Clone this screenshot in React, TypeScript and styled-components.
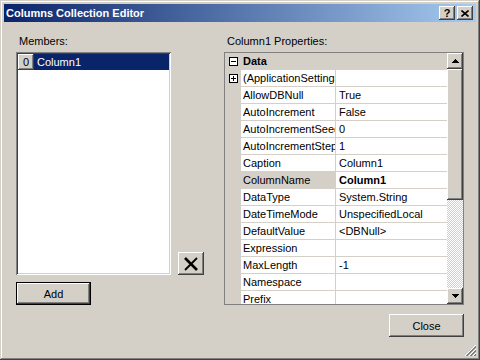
import React from 'react';
import styled, { createGlobalStyle, css } from 'styled-components';

const face = '#D4D0C8';

const GlobalStyle = createGlobalStyle`
	html, body {
		margin: 0;
		padding: 0;
		background: ${face};
	}
	body {
		font-family: "Liberation Sans", Arial, sans-serif;
		font-size: 11px;
		color: #000;
	}
`;

const raised = css`
	background: ${face};
	box-shadow: inset -1px -1px #404040, inset 1px 1px #fff, inset -2px -2px #808080, inset 2px 2px ${face};
`;

type Property = {
	name: string;
	value: string;
	expandable?: boolean;
	selected?: boolean;
	modified?: boolean;
};

const properties: Property[] = [
	{ name: '(ApplicationSettings)', value: '', expandable: true },
	{ name: 'AllowDBNull', value: 'True' },
	{ name: 'AutoIncrement', value: 'False' },
	{ name: 'AutoIncrementSeed', value: '0' },
	{ name: 'AutoIncrementStep', value: '1' },
	{ name: 'Caption', value: 'Column1' },
	{ name: 'ColumnName', value: 'Column1', selected: true, modified: true },
	{ name: 'DataType', value: 'System.String' },
	{ name: 'DateTimeMode', value: 'UnspecifiedLocal' },
	{ name: 'DefaultValue', value: '<DBNull>' },
	{ name: 'Expression', value: '' },
	{ name: 'MaxLength', value: '-1' },
	{ name: 'Namespace', value: '' },
	{ name: 'Prefix', value: '' },
	{ name: 'ReadOnly', value: 'False' },
];

const ExpandBox = ({ open }: { open: boolean }) => (
	<svg width="9" height="9" viewBox="0 0 9 9" shapeRendering="crispEdges">
		<rect x="0.5" y="0.5" width="8" height="8" fill="#fff" stroke="#000" />
		<line x1="2" y1="4.5" x2="7" y2="4.5" stroke="#000" />
		{!open && <line x1="4.5" y1="2" x2="4.5" y2="7" stroke="#000" />}
	</svg>
);

const Arrow = ({ down }: { down?: boolean }) => (
	<svg width="7" height="4" viewBox="0 0 7 4" shapeRendering="crispEdges">
		<polygon points={down ? '0,0 7,0 3.5,4' : '3.5,0 7,4 0,4'} fill="#000" />
	</svg>
);

const Dialog: React.FC = () => {
	return (
		<Window>
			<TitleBar>
				<Title>Columns Collection Editor</Title>
				<CaptionButtons>
					<CaptionButton>?</CaptionButton>
					<CaptionButton>
						<svg width="8" height="7" viewBox="0 0 8 7">
							<path d="M0.5 0.5 L7.5 6.5 M7.5 0.5 L0.5 6.5" stroke="#000" strokeWidth="1.6" />
						</svg>
					</CaptionButton>
				</CaptionButtons>
			</TitleBar>
			<Body>
				<Panes>
					<LeftPane>
						<Label>Members:</Label>
						<ListRow>
							<MemberList>
								<MemberItem>
									<IndexCell>0</IndexCell>
									<MemberName>Column1</MemberName>
								</MemberItem>
							</MemberList>
							<DeleteButton>
								<svg width="16" height="14" viewBox="0 0 16 14">
									<path d="M2 1 L14 13" stroke="#000" strokeWidth="2.6" />
									<path d="M14 1 L2 13" stroke="#000" strokeWidth="1.8" />
								</svg>
							</DeleteButton>
						</ListRow>
						<AddButton>Add</AddButton>
					</LeftPane>
					<RightPane>
						<Label>Column1 Properties:</Label>
						<PropertyGrid>
							<Rows>
								<CategoryRow>
									<Margin>
										<ExpandBox open />
									</Margin>
									<CategoryName>Data</CategoryName>
								</CategoryRow>
								{properties.map((p) => (
									<PropRow key={p.name}>
										<Margin>{p.expandable && <ExpandBox open={false} />}</Margin>
										<NameCell $selected={p.selected}>{p.name}</NameCell>
										<ValueCell $bold={p.modified}>{p.value}</ValueCell>
									</PropRow>
								))}
							</Rows>
							<ScrollBar>
								<ScrollButton>
									<Arrow />
								</ScrollButton>
								<Thumb />
								<Track />
								<ScrollButton>
									<Arrow down />
								</ScrollButton>
							</ScrollBar>
						</PropertyGrid>
					</RightPane>
				</Panes>
				<Footer>
					<PushButton>Close</PushButton>
				</Footer>
			</Body>
			<SizeGrip width="13" height="13" viewBox="0 0 13 13" shapeRendering="crispEdges">
				<path d="M12 1 L1 12 M12 5 L5 12 M12 9 L9 12" stroke="#fff" />
				<path d="M12 2 L2 12 M12 3 L3 12 M12 6 L6 12 M12 7 L7 12 M12 10 L10 12 M12 11 L11 12" stroke="#808080" />
			</SizeGrip>
		</Window>
	);
};

const App: React.FC = () => (
	<>
		<GlobalStyle />
		<Dialog />
	</>
);

const Window = styled.div`
	position: relative;
	box-sizing: border-box;
	width: 480px;
	height: 360px;
	padding: 4px;
	display: flex;
	flex-direction: column;
	background: ${face};
	box-shadow: inset -1px -1px #404040, inset 1px 1px ${face}, inset -2px -2px #808080, inset 2px 2px #fff;
`;

const TitleBar = styled.div`
	height: 18px;
	display: flex;
	align-items: center;
	padding: 0 3px 0 2px;
	background: linear-gradient(to right, #0a246a, #a6caf0);
`;

const Title = styled.div`
	color: #fff;
	font-weight: bold;
	font-size: 11px;
	line-height: 18px;
	white-space: nowrap;
`;

const CaptionButtons = styled.div`
	margin-left: auto;
	display: flex;
	gap: 2px;
`;

const CaptionButton = styled.div`
	${raised};
	width: 16px;
	height: 14px;
	display: flex;
	align-items: center;
	justify-content: center;
	font-weight: bold;
	font-size: 11px;
	line-height: 14px;
`;

const Body = styled.div`
	flex: 1;
	display: flex;
	flex-direction: column;
	padding: 13px 12px 0 12px;
`;

const Panes = styled.div`
	display: flex;
	gap: 20px;
`;

const LeftPane = styled.div`
	width: 188px;
	display: flex;
	flex-direction: column;
`;

const RightPane = styled.div`
	width: 240px;
	display: flex;
	flex-direction: column;
`;

const Label = styled.div`
	line-height: 13px;
	padding-left: 3px;
	margin-bottom: 4px;
`;

const ListRow = styled.div`
	display: flex;
	align-items: flex-end;
	gap: 7px;
`;

const MemberList = styled.div`
	box-sizing: border-box;
	width: 155px;
	height: 223px;
	padding: 2px;
	background: #fff;
	box-shadow: inset 1px 1px #808080, inset -1px -1px #fff, inset 2px 2px #404040, inset -2px -2px ${face};
`;

const MemberItem = styled.div`
	display: flex;
	height: 16px;
`;

const IndexCell = styled.div`
	${raised};
	width: 16px;
	text-align: center;
	line-height: 16px;
`;

const MemberName = styled.div`
	flex: 1;
	padding-left: 3px;
	line-height: 16px;
	color: #fff;
	background: #0a246a;
`;

const PushButton = styled.div`
	${raised};
	box-sizing: border-box;
	width: 75px;
	height: 23px;
	display: flex;
	align-items: center;
	justify-content: center;
`;

const DeleteButton = styled(PushButton)`
	width: 26px;
`;

const AddButton = styled(PushButton)`
	margin-top: 7px;
	border: 1px solid #000;
`;

const PropertyGrid = styled.div`
	box-sizing: border-box;
	height: 253px;
	display: flex;
	border: 1px solid #808080;
	background: ${face};
	overflow: hidden;
`;

const Rows = styled.div`
	flex: 1;
	min-width: 0;
	display: flex;
	flex-direction: column;
	overflow: hidden;
`;

const Margin = styled.div`
	flex: none;
	width: 16px;
	display: flex;
	align-items: center;
	justify-content: center;
	background: ${face};
`;

const CategoryRow = styled.div`
	flex: none;
	display: flex;
	height: 17px;
	background: ${face};
`;

const CategoryName = styled.div`
	padding-left: 2px;
	font-weight: bold;
	line-height: 16px;
`;

const PropRow = styled.div`
	flex: none;
	display: flex;
	height: 17px;
`;

const NameCell = styled.div<{ $selected?: boolean }>`
	box-sizing: border-box;
	width: 95px;
	padding-left: 2px;
	line-height: 16px;
	white-space: nowrap;
	overflow: hidden;
	background: ${(p) => (p.$selected ? face : '#fff')};
	border-right: 1px solid ${face};
	border-bottom: 1px solid ${face};
`;

const ValueCell = styled.div<{ $bold?: boolean }>`
	flex: 1;
	padding-left: 3px;
	line-height: 16px;
	white-space: nowrap;
	overflow: hidden;
	font-weight: ${(p) => (p.$bold ? 'bold' : 'normal')};
	background: #fff;
	border-bottom: 1px solid ${face};
`;

const ScrollBar = styled.div`
	flex: none;
	width: 16px;
	display: flex;
	flex-direction: column;
`;

const ScrollButton = styled.div`
	${raised};
	flex: none;
	height: 16px;
	display: flex;
	align-items: center;
	justify-content: center;
`;

const Thumb = styled.div`
	${raised};
	flex: none;
	height: 131px;
`;

const Track = styled.div`
	flex: 1;
	background-image: conic-gradient(#fff 25%, ${face} 0 50%, #fff 0 75%, ${face} 0);
	background-size: 2px 2px;
`;

const Footer = styled.div`
	display: flex;
	justify-content: flex-end;
	padding-top: 9px;
`;

const SizeGrip = styled.svg`
	position: absolute;
	right: 3px;
	bottom: 3px;
`;

export default App;
